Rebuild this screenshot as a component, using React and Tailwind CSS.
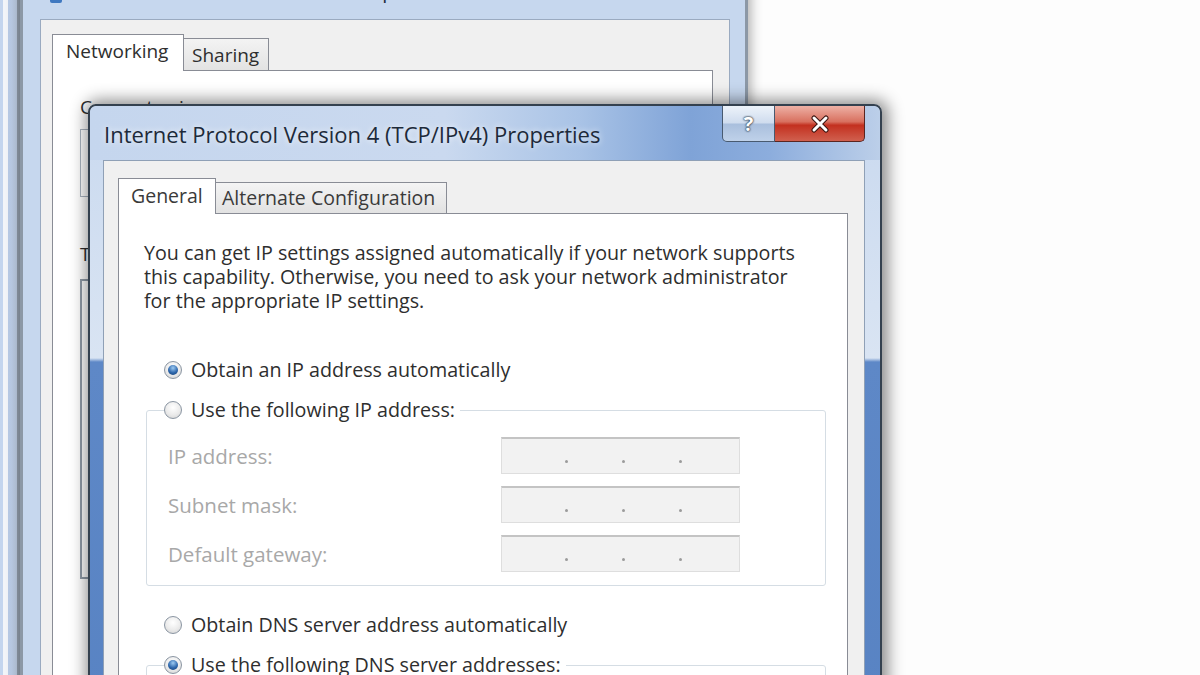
import React from 'react';

const Radio = ({ checked }) => (
  <span className="w-[18px] h-[18px] rounded-full border border-[#8a95a2] bg-[radial-gradient(circle_at_50%_35%,#ffffff_0%,#ebebeb_55%,#cfcfcf_100%)] flex items-center justify-center shrink-0">
    {checked && (
      <span className="w-[10px] h-[10px] rounded-full bg-[radial-gradient(circle_at_50%_30%,#9ccaf2_0%,#2f68ad_55%,#123b70_100%)]" />
    )}
  </span>
);

const IpBox = () => (
  <div className="w-[239px] h-[37px] border border-[#dedede] border-t-2 border-t-[#c4c4c4] bg-[#f2f2f2] flex items-end pb-[10px] pl-[63px] gap-[54px] shrink-0">
    <span className="w-[3px] h-[3px] rounded-full bg-[#9b9b9b]" />
    <span className="w-[3px] h-[3px] rounded-full bg-[#9b9b9b]" />
    <span className="w-[3px] h-[3px] rounded-full bg-[#9b9b9b]" />
  </div>
);

const fields = ['IP address:', 'Subnet mask:', 'Default gateway:'];
const dnsFields = ['Preferred DNS server:', 'Alternate DNS server:'];

const App = () => {
  return (
    <div className="relative w-[1200px] h-[675px] overflow-hidden bg-[#fdfdfd] font-['Open_Sans',sans-serif] text-[#2e2e2e]">
      {/* sliver of a window further behind */}
      <div className="absolute left-0 top-0 h-full w-[20px] bg-[linear-gradient(90deg,#c3d5ee_0px,#c3d5ee_3px,#f2f5f9_3px,#f2f5f9_8px,#b9cce8_8px,#c9d9ef_17px,#98a4b2_17px,#98a4b2_20px)]" />

      {/* back window: Wireless Network Connection Properties */}
      <div className="absolute left-[20px] top-[-30px] w-[728px] h-[760px] rounded-t-[7px] border-[3px] border-[#8c98a6] bg-[#c6d7ee] shadow-[0_0_12px_3px_rgba(0,0,0,0.3)] flex flex-col overflow-hidden">
        <div className="h-[46px] shrink-0 flex items-start pt-[6px] pl-[27px] gap-[8px] overflow-hidden">
          <span className="w-[12px] h-[12px] mt-[12px] rounded-[2px] bg-[#3f78c0]" />
          <span className="text-[20px] leading-[24px] text-[#1f2d3d]">Wireless Network Connection Properties</span>
        </div>
        <div className="flex-1 min-h-0 ml-[17px] mr-[15px] border border-[#9aaac0] bg-[#f0f0f0] pt-[13px] pl-[11px] pr-[16px]">
          <div className="flex items-end h-[37px] text-[19px]">
            <div className="w-[132px] h-[37px] border border-b-0 border-[#898c95] bg-white relative z-10 mb-[-1px] pl-[13px] pt-[2px]">Networking</div>
            <div className="w-[85px] h-[32px] border border-b-0 border-l-0 border-[#898c95] bg-[linear-gradient(#f3f3f3,#e3e3e3)] pl-[8px] pt-[2px]">Sharing</div>
          </div>
          <div className="h-[700px] border border-[#898c95] bg-white pt-[24px] pl-[27px] text-[19px] leading-[24px]">
            <div>Connect using:</div>
            <div className="mt-[10px] h-[68px] w-[610px] border border-[#a9b3bf] bg-white" />
            <div className="mt-[45px]">This connection uses the following items:</div>
            <div className="mt-[13px] h-[300px] w-[610px] border-2 border-[#8f9aa6] bg-white" />
          </div>
        </div>
      </div>

      {/* front window: IPv4 properties */}
      <div className="absolute left-[88px] top-[104px] w-[794px] h-[620px] rounded-t-[8px] border-2 border-[#34414f] shadow-[2px_0_16px_4px_rgba(0,0,0,0.45)] bg-[linear-gradient(180deg,#c9d9ef_0px,#d6e2f2_200px,#d9e4f3_252px,#5e88c7_256px,#5883c3_100%)] flex flex-col overflow-hidden">
        <div className="relative h-[54px] shrink-0 rounded-t-[6px] bg-[linear-gradient(90deg,#c5d6ee_0%,#cad9ef_45%,#a9c3e6_62%,#7fa3d7_76%,#8caddd_86%,#bccfe9_100%)] flex items-center pl-[14px]">
          <span className="text-[22px] pt-[2px] text-[#1d2a3a] [text-shadow:0_0_6px_rgba(255,255,255,0.9)]">Internet Protocol Version 4 (TCP/IPv4) Properties</span>
          <div className="absolute right-[15px] top-0 flex">
            <div className="w-[53px] h-[36px] rounded-bl-[5px] border border-t-0 border-[#485a70] bg-[linear-gradient(180deg,#edf3fa_0%,#cfdcee_48%,#a9bfdd_52%,#bfd1e9_100%)] flex items-center justify-center text-[20px] font-bold text-white [text-shadow:0_0_2px_#1b2a3a,0_0_2px_#1b2a3a]">?</div>
            <div className="w-[90px] h-[36px] rounded-br-[5px] border border-t-0 border-l-0 border-[#5a2520] bg-[linear-gradient(180deg,#eeb1a6_0%,#d8705f_45%,#c3301f_55%,#d0604f_100%)] flex items-center justify-center">
              <svg width="22" height="18" viewBox="0 0 22 18">
                <path d="M5 3 L17 15 M17 3 L5 15" stroke="#3a1410" strokeWidth="5" strokeLinecap="round" />
                <path d="M5 3 L17 15 M17 3 L5 15" stroke="#ffffff" strokeWidth="3" strokeLinecap="round" />
              </svg>
            </div>
          </div>
        </div>

        <div className="flex-1 min-h-0 ml-[13px] mr-[15px] border border-[#8fa0b6] bg-[#f0f0f0] pt-[16px] pl-[14px] pr-[16px]">
          <div className="flex items-end h-[36px] text-[19.5px]">
            <div className="w-[98px] h-[36px] border border-b-0 border-[#898c95] bg-white relative z-10 mb-[-1px] pl-[12px] pt-[2px] text-[#3a3a3a]">General</div>
            <div className="w-[231px] h-[31px] border border-b-0 border-l-0 border-[#898c95] bg-[linear-gradient(#f4f4f4,#e2e2e2)] pl-[6px] text-[#3a3a3a]">Alternate Configuration</div>
          </div>
          <div className="h-[600px] border border-[#898c95] bg-white pt-[27px] pl-[25px] text-[19.7px] leading-[24px]">
            <p>
              You can get IP settings assigned automatically if your network supports
              <br />
              this capability. Otherwise, you need to ask your network administrator
              <br />
              for the appropriate IP settings.
            </p>

            <div className="mt-[37px] h-[40px] flex items-center pl-[20px] gap-[9px]">
              <Radio checked />
              <span>Obtain an IP address automatically</span>
            </div>

            <fieldset className="ml-[2px] w-[680px] border border-[#d5dde4] rounded-[3px] pl-[17px] pb-[13px]">
              <legend className="h-[40px] flex items-center gap-[9px] pr-[5px]">
                <Radio />
                <span>Use the following IP address:</span>
              </legend>
              <div className="flex flex-col gap-[12px] pt-[7px] pl-[4px]">
                {fields.map((f) => (
                  <div key={f} className="flex items-center">
                    <span className="w-[333px] text-[20.5px] text-[#a8a8a8]">{f}</span>
                    <IpBox />
                  </div>
                ))}
              </div>
            </fieldset>

            <div className="mt-[19px] h-[40px] flex items-center pl-[20px] gap-[9px]">
              <Radio />
              <span>Obtain DNS server address automatically</span>
            </div>

            <fieldset className="ml-[2px] w-[680px] border border-[#d5dde4] rounded-[3px] pl-[17px] pb-[13px]">
              <legend className="h-[40px] flex items-center gap-[9px] pr-[5px]">
                <Radio checked />
                <span>Use the following DNS server addresses:</span>
              </legend>
              <div className="flex flex-col gap-[12px] pt-[7px] pl-[4px]">
                {dnsFields.map((f) => (
                  <div key={f} className="flex items-center">
                    <span className="w-[333px]">{f}</span>
                    <IpBox />
                  </div>
                ))}
              </div>
            </fieldset>
          </div>
        </div>
      </div>
    </div>
  );
};

export default App;
